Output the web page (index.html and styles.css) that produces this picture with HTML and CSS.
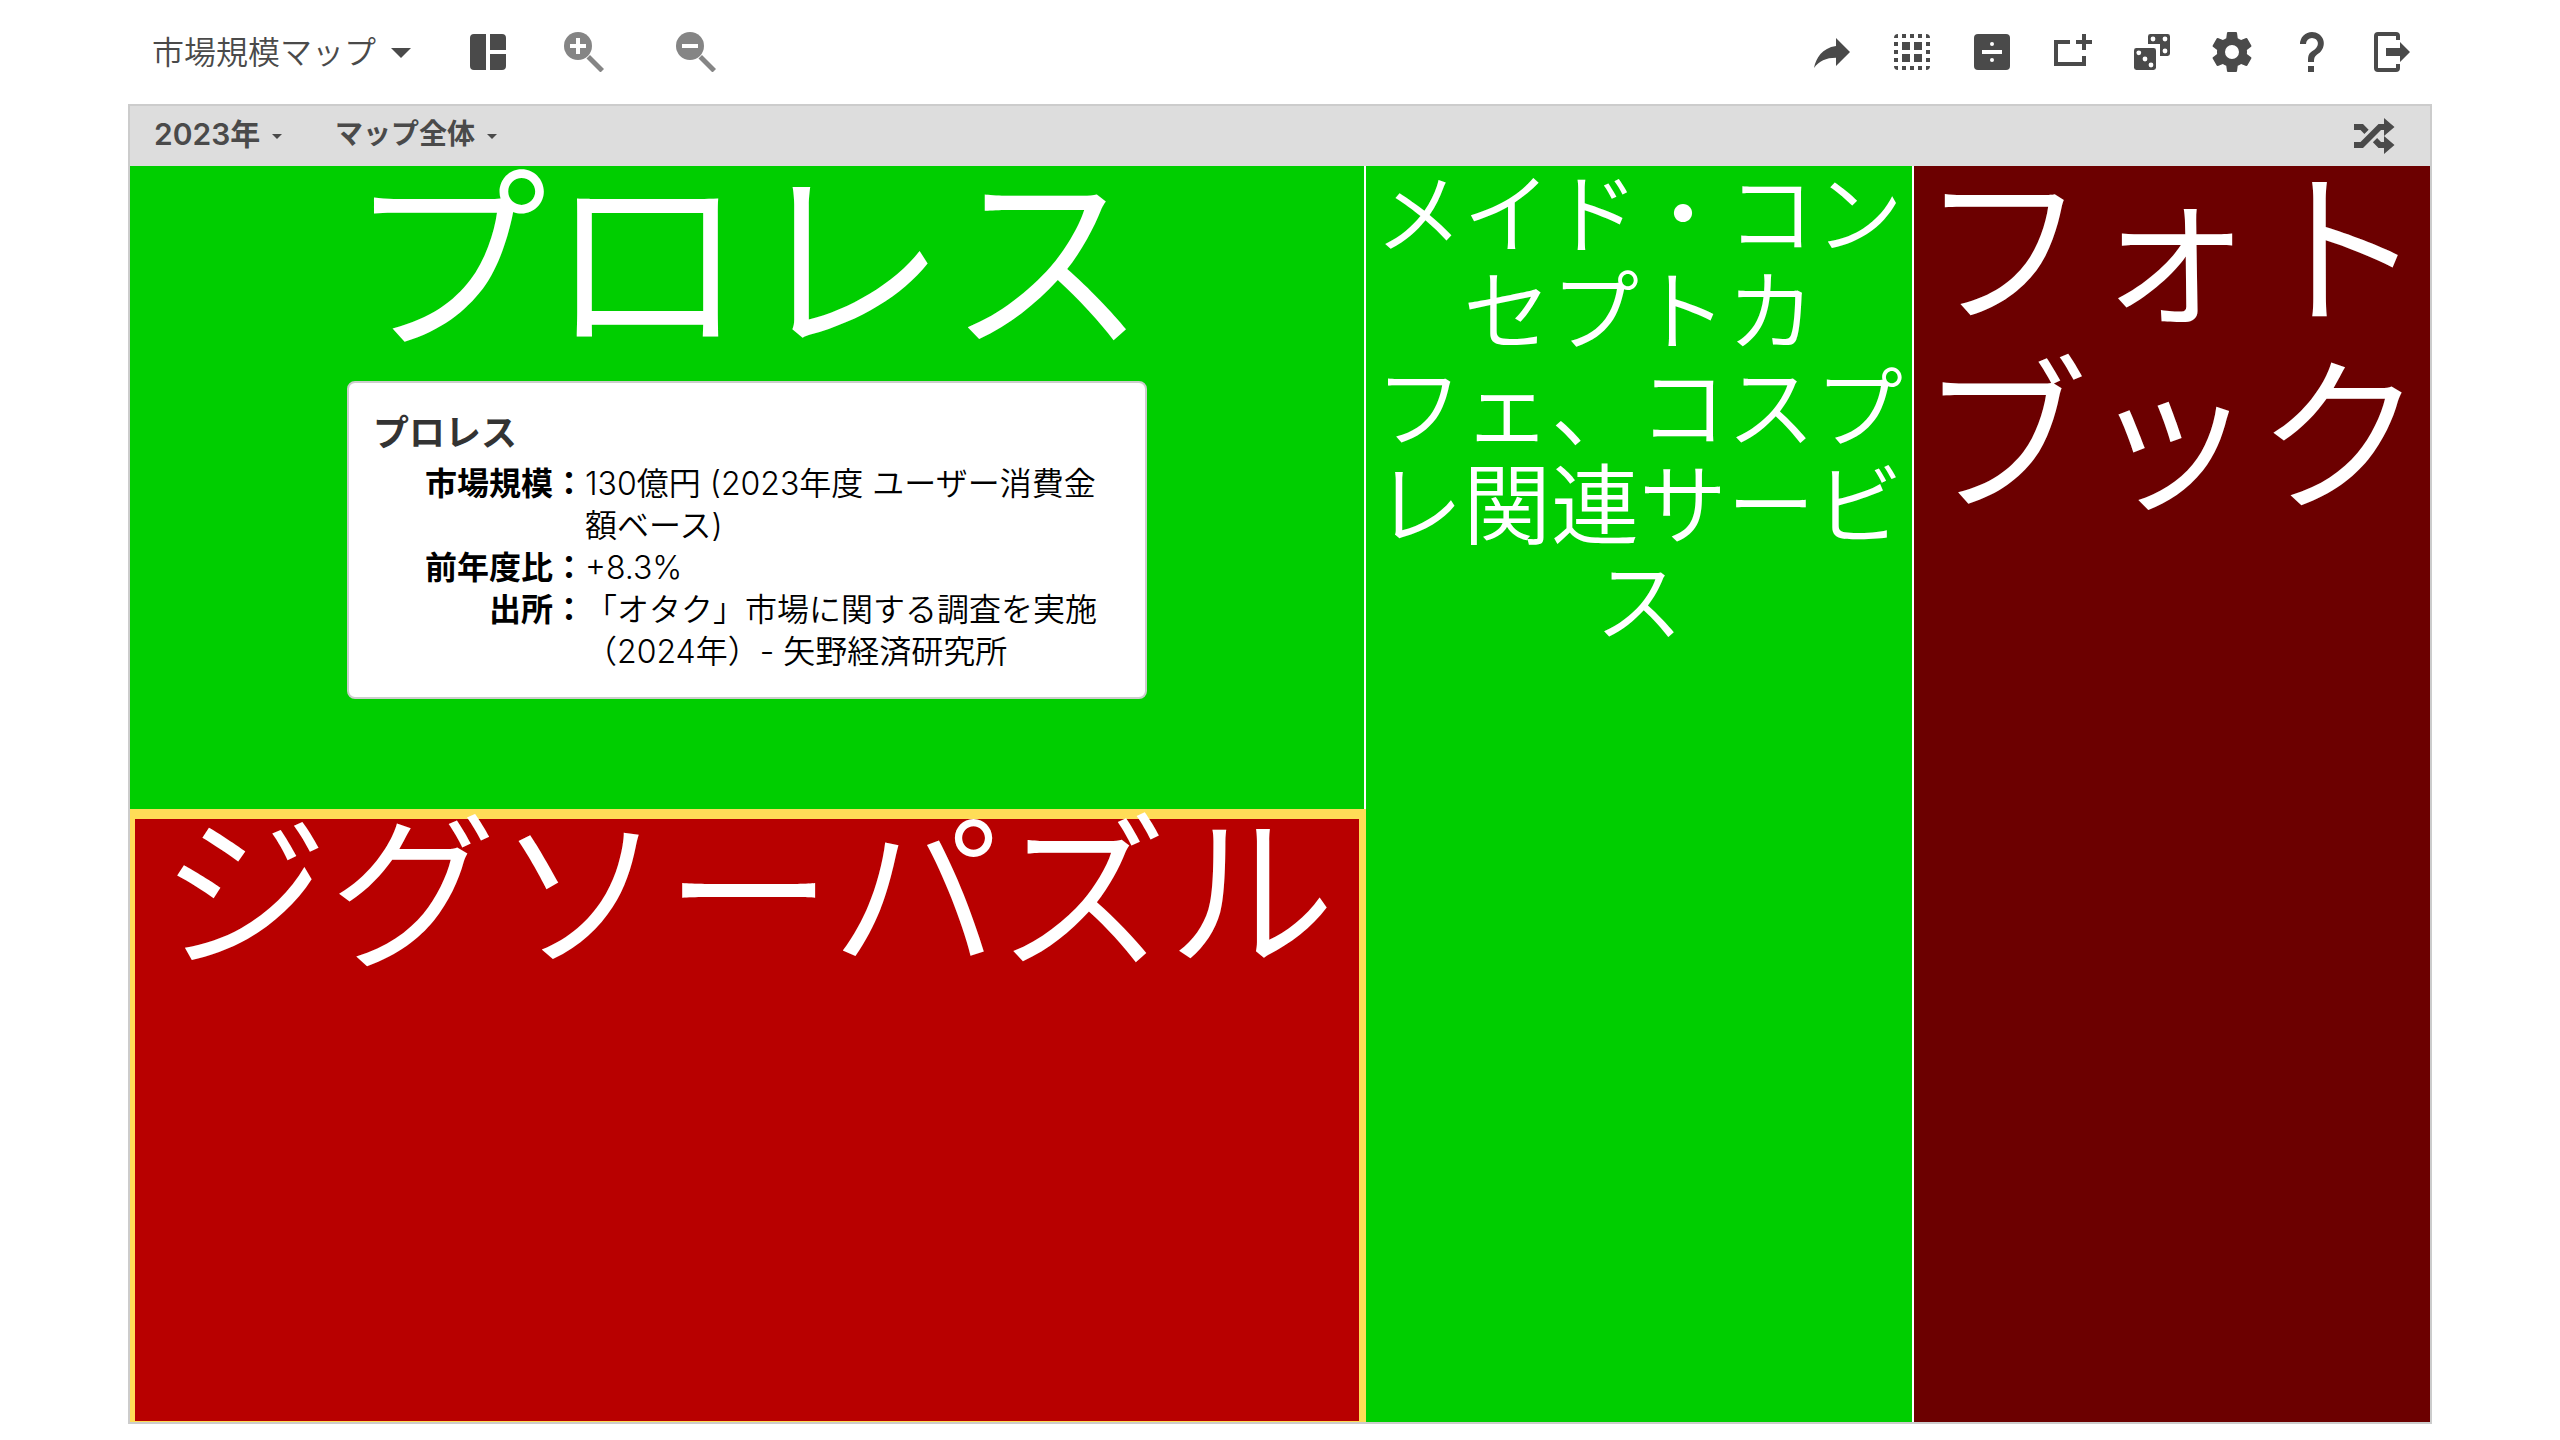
FILE: index.html
```html
<!DOCTYPE html>
<html lang="ja">
<head>
<meta charset="utf-8">
<meta name="viewport" content="width=device-width, initial-scale=1">
<title>市場規模マップ</title>
<link rel="stylesheet" href="styles.css">
</head>
<body>
<div class="page">
  <header class="toolbar">
    <div class="picker">
      <select class="picker-select" aria-label="マップの種類"><option>市場規模マップ</option></select>
      <svg class="icon" viewBox="0 0 24 24" aria-hidden="true"><path d="M7 10l5 5 5-5z"/></svg>
    </div>
    <div class="view-tools">
      <button class="tool" type="button" aria-label="レイアウト"><svg class="icon" viewBox="0 0 24 24"><path d="M11 3v18H5a2 2 0 0 1-2-2V5a2 2 0 0 1 2-2zM13 3h6a2 2 0 0 1 2 2v6h-8zM13 13h8v6a2 2 0 0 1-2 2h-6z"/></svg></button>
      <button class="tool tool-muted" type="button" aria-label="拡大"><svg class="icon-zoom" viewBox="0 0 40 40"><circle cx="14" cy="14" r="14"/><path d="M22.500 26.500l3.500-3.500 14 14-3.500 3.500z"/><path class="cut" d="M12 6h4v6h6v4h-6v6h-4v-6H6v-4h6z"/></svg></button>
      <button class="tool tool-muted" type="button" aria-label="縮小"><svg class="icon-zoom" viewBox="0 0 40 40"><circle cx="14" cy="14" r="14"/><path d="M22.500 26.500l3.500-3.500 14 14-3.500 3.500z"/><path class="cut" d="M6 12h16v4H6z"/></svg></button>
    </div>
    <nav class="actions" aria-label="操作">
      <button class="tool" type="button" aria-label="共有"><svg class="icon" viewBox="0 0 24 24"><path d="M14 9V5l7 7-7 7v-4.100c-5 0-8.500 1.600-11 5.100 1-5 4-10 11-11z"/></svg></button>
      <button class="tool" type="button" aria-label="すべて選択"><svg class="icon" viewBox="0 0 24 24"><path d="M5 3v2H3a2 2 0 0 1 2-2zM7 3h2v2H7zM11 3h2v2h-2zM15 3h2v2h-2zM19 3a2 2 0 0 1 2 2h-2zM3 7h2v2H3zM3 11h2v2H3zM3 15h2v2H3zM19 7h2v2h-2zM19 11h2v2h-2zM19 15h2v2h-2zM5 21a2 2 0 0 1-2-2h2zM7 19h2v2H7zM11 19h2v2h-2zM15 19h2v2h-2zM21 19a2 2 0 0 1-2 2v-2zM7 7h4v4H7zM13 7h4v4h-4zM7 13h4v4H7zM13 13h4v4h-4z"/></svg></button>
      <button class="tool" type="button" aria-label="比率"><svg class="icon" viewBox="0 0 24 24"><rect x="3" y="3" width="18" height="18" rx="2"/><path class="cut" d="M7 11h10v2H7z"/><circle class="cut" cx="12" cy="8" r="1"/><circle class="cut" cx="12" cy="16" r="1"/></svg></button>
      <button class="tool" type="button" aria-label="マップを追加"><svg class="icon" viewBox="0 0 24 24"><path d="M3 6h8v2H5v9h12v-3h2v5H3zM17 3h2v3h3v2h-3v3h-2V8h-3V6h3z"/></svg></button>
      <button class="tool" type="button" aria-label="ランダム"><svg class="icon" viewBox="0 0 24 24"><rect x="3" y="10" width="11" height="11" rx="1.200"/><path d="M11.200 3h8.600A1.200 1.200 0 0 1 21 4.200v8.600a1.200 1.200 0 0 1-1.200 1.200H16V8h-6V4.200A1.200 1.200 0 0 1 11.200 3z"/><g class="cut"><circle cx="5.400" cy="12.400" r="1.200"/><circle cx="8.500" cy="15.500" r="1.200"/><circle cx="11.500" cy="18.500" r="1.200"/><circle cx="12.500" cy="5.500" r="1.200"/><circle cx="18.500" cy="5.500" r="1.200"/><circle cx="18.500" cy="11.500" r="1.200"/></g></svg></button>
      <button class="tool" type="button" aria-label="設定"><svg class="icon" viewBox="0 0 24 24"><path d="M12,15.5A3.5,3.5 0 0,1 8.5,12A3.5,3.5 0 0,1 12,8.5A3.5,3.5 0 0,1 15.5,12A3.5,3.5 0 0,1 12,15.5M19.43,12.97C19.47,12.65 19.5,12.33 19.5,12C19.5,11.67 19.47,11.34 19.43,11L21.54,9.37C21.73,9.22 21.78,8.95 21.66,8.73L19.66,5.27C19.54,5.05 19.27,4.96 19.05,5.05L16.56,6.05C16.04,5.66 15.5,5.32 14.87,5.07L14.5,2.42C14.46,2.18 14.25,2 14,2H10C9.75,2 9.54,2.18 9.5,2.42L9.13,5.07C8.5,5.32 7.96,5.66 7.44,6.05L4.95,5.05C4.73,4.96 4.46,5.05 4.34,5.27L2.34,8.73C2.21,8.95 2.27,9.22 2.46,9.37L4.57,11C4.53,11.34 4.5,11.67 4.5,12C4.5,12.33 4.53,12.65 4.57,12.97L2.46,14.63C2.27,14.78 2.21,15.05 2.34,15.27L4.34,18.73C4.46,18.95 4.73,19.03 4.95,18.95L7.44,17.94C7.96,18.34 8.5,18.68 9.13,18.93L9.5,21.58C9.54,21.82 9.75,22 10,22H14C14.25,22 14.46,21.82 14.5,21.58L14.87,18.93C15.5,18.67 16.04,18.34 16.56,17.94L19.05,18.95C19.27,19.03 19.54,18.95 19.66,18.73L21.66,15.27C21.78,15.05 21.73,14.78 21.54,14.63L19.43,12.97Z"/></svg></button>
      <button class="tool" type="button" aria-label="ヘルプ"><svg class="icon" viewBox="0 0 24 24"><path d="M10,19H13V22H10V19M12,2C17.35,2.22 19.68,7.62 16.5,11.67C15.67,12.67 14.33,13.33 13.67,14.17C13,15 13,16 13,17H10C10,15.33 10,13.92 10.67,12.92C11.33,11.92 12.67,11.33 13.5,10.67C15.92,8.43 15.32,5.26 12,5A3,3 0 0,0 9,8H6A6,6 0 0,1 12,2Z"/></svg></button>
      <button class="tool" type="button" aria-label="ログアウト"><svg class="icon" viewBox="0 0 24 24"><path d="M5 2h9a2 2 0 0 1 2 2v2h-2V4H5v16h9v-2h2v2a2 2 0 0 1-2 2H5a2 2 0 0 1-2-2V4a2 2 0 0 1 2-2zM16 7l5 5-5 5v-3H9v-4h7z"/></svg></button>
    </nav>
  </header>

  <main class="frame">
    <div class="filters">
      <div class="filter">
        <select class="filter-select filter-year" aria-label="年"><option>2023年</option></select>
        <svg class="caret" viewBox="0 0 24 24" aria-hidden="true"><path d="M7 10l5 5 5-5z"/></svg>
      </div>
      <div class="filter">
        <select class="filter-select" aria-label="範囲"><option>マップ全体</option></select>
        <svg class="caret" viewBox="0 0 24 24" aria-hidden="true"><path d="M7 10l5 5 5-5z"/></svg>
      </div>
      <button class="tool shuffle" type="button" aria-label="シャッフル"><svg class="icon" viewBox="0 0 24 24"><path d="M17,3L22.25,7.5L17,12L22.25,16.5L17,21V18H14.26L11.44,15.18L13.56,13.06L15.5,15H17V12L17,9H15.5L6.5,18H2V15H5.26L14.26,6H17V3M2,6H6.5L9.32,8.82L7.2,10.94L5.26,9H2V6Z"/></svg></button>
    </div>

    <div class="treemap">
      <div class="stack">
        <section class="tile tile-up">
          <h2 class="tile-name name-xl">プロレス</h2>
          <div class="tooltip" role="tooltip">
            <h3 class="tooltip-title">プロレス</h3>
            <dl class="facts">
              <dt>市場規模：</dt><dd>130億円 (2023年度 ユーザー消費金額ベース)</dd>
              <dt>前年度比：</dt><dd>+8.3%</dd>
              <dt>出所：</dt><dd>「オタク」市場に関する調査を実施（2024年）- 矢野経済研究所</dd>
            </dl>
          </div>
        </section>
        <section class="tile tile-down tile-selected">
          <h2 class="tile-name name-l">ジグソーパズル</h2>
        </section>
      </div>
      <section class="tile tile-up">
        <h2 class="tile-name name-m">メイド・コンセプトカ<br>フェ、コスプレ関連サービス</h2>
      </section>
      <section class="tile tile-steep">
        <h2 class="tile-name name-l">フォトブック</h2>
      </section>
    </div>
  </main>
</div>
</body>
</html>
```

FILE: styles.css
```css
* {
  box-sizing: border-box;
}

body {
  margin: 0;
  background: #fff;
  color: #000;
  font-family: Inter, "Noto Sans CJK JP", sans-serif;
}

h2, h3, dl, dd {
  margin: 0;
}

.page {
  display: flex;
  flex-direction: column;
  min-height: 100vh;
  padding: 0 5% 16px;
}

/* Toolbar */
.toolbar {
  display: flex;
  align-items: center;
  height: 104px;
  padding: 0 16px 0 24px;
  color: #4a4a4a;
}

.picker,
.filter {
  display: flex;
  align-items: center;
}

.picker-select,
.filter-select {
  appearance: none;
  padding: 0;
  border: 0;
  background: none;
  color: #4a4a4a;
  font-family: inherit;
}

.picker-select {
  height: 48px;
  font-size: 32px;
  font-weight: 350;
}

.tool {
  display: flex;
  align-items: center;
  justify-content: center;
  padding: 0;
  border: 0;
  background: none;
  color: #4a4a4a;
}

.tool-muted {
  color: #858585;
}

.icon {
  display: block;
  width: 48px;
  height: 48px;
  fill: currentColor;
}

.icon-zoom {
  display: block;
  width: 40px;
  height: 40px;
  fill: currentColor;
}

.cut {
  fill: #fff;
}

.view-tools {
  display: flex;
  gap: 72px;
  margin-left: 39px;
}

.view-tools .tool:nth-child(2) {
  margin-left: -20px;
}

.actions {
  display: flex;
  gap: 32px;
  margin-left: auto;
}

/* Map frame */
.frame {
  display: flex;
  flex: 1;
  flex-direction: column;
  border: 2px solid #ccc;
}

.filters {
  display: flex;
  align-items: center;
  gap: 46px;
  height: 60px;
  padding: 0 32px 0 24px;
  background: #ddd;
}

.filter-select {
  height: 40px;
  padding-bottom: 4px;
  font-size: 28px;
  font-weight: 600;
}

.filter-year {
  font-size: 30px;
}

.caret {
  width: 24px;
  height: 24px;
  margin-left: 4px;
  fill: #4a4a4a;
}

.shuffle {
  margin-left: auto;
}

/* Treemap */
.treemap {
  display: grid;
  flex: 1;
  grid-template-columns: 1236fr 548fr 516fr;
}

.stack {
  display: grid;
  grid-template-rows: 643fr 613fr;
}

.tile {
  position: relative;
  border-right: 2px solid #fff;
}

.tile-up {
  background: #00ce00;
}

.tile-down {
  background: #b80000;
}

.tile-steep {
  border-right: 0;
  background: #6c0000;
}

.tile-selected {
  isolation: isolate;
  border-right: 0;
}

/* Highlight frame sits under the tile's name */
.tile-selected::before {
  position: absolute;
  z-index: -1;
  inset: 0;
  border: solid #ffdd57;
  border-width: 10px 7px 1px 5px;
  content: "";
}

.tile-name {
  color: #fff;
  font-weight: 350;
  text-align: center;
  word-break: break-all;
}

.name-xl {
  font-size: 200px;
  line-height: 192px;
}

.name-l {
  margin-top: -8px;
  font-size: 168px;
  line-height: 186px;
}

.name-m {
  font-size: 88px;
  line-height: 97px;
}

/* Tooltip */
.tooltip {
  position: absolute;
  top: 215px;
  left: 50%;
  width: 800px;
  padding: 24px;
  border: 2px solid #ccc;
  border-radius: 8px;
  background: #fff;
  transform: translateX(-50%);
}

.tooltip-title {
  margin-bottom: 4px;
  color: #333;
  font-size: 36px;
  font-weight: 600;
  line-height: 52px;
}

.facts {
  display: grid;
  grid-template-columns: 212px 1fr;
  font-size: 32px;
  line-height: 42px;
}

.facts dt {
  font-weight: 700;
  text-align: right;
}

.facts dd {
  font-weight: 350;
}
```
